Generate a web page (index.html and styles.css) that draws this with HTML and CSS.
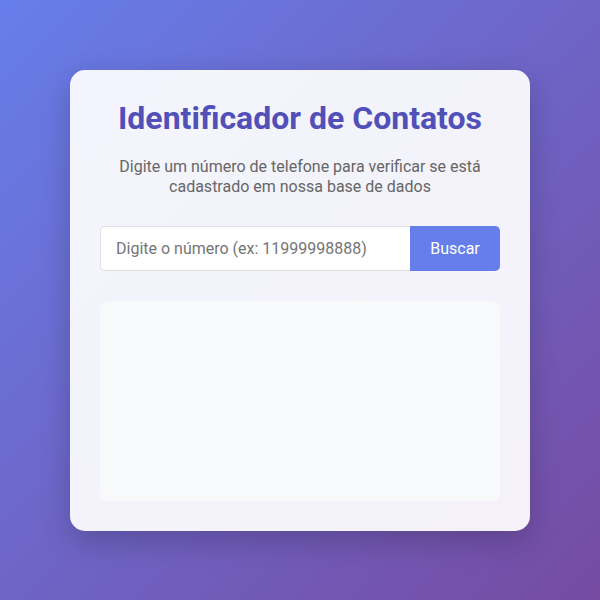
FILE: index.html
```html
<!DOCTYPE html>
<html lang="pt-BR">
<head>
<meta charset="utf-8">
<title>Identificador de Contatos</title>
<link rel="stylesheet" href="styles.css">
</head>
<body>
<div class="card">
  <h1 class="title">Identificador de Contatos</h1>
  <p class="subtitle">Digite um número de telefone para verificar se está cadastrado em nossa base de dados</p>
  <div class="search">
    <input class="search-input" type="text" placeholder="Digite o número (ex: 11999998888)">
    <button class="search-btn">Buscar</button>
  </div>
  <div class="results"></div>
</div>
</body>
</html>
```
FILE: styles.css
```css
* { box-sizing: border-box; }
html, body { margin: 0; padding: 0; }
body {
  min-height: 100vh;
  background: linear-gradient(135deg, #667eea 0%, #764ba2 100%);
  font-family: Roboto, "Noto Sans", sans-serif;
  display: flex;
  align-items: center;
  justify-content: center;
}
.card {
  width: 460px;
  padding: 30px;
  background: rgba(255, 255, 255, 0.92);
  border-radius: 15px;
  box-shadow: 0 10px 30px rgba(0, 0, 0, 0.2);
}
.title {
  margin: 0;
  text-align: center;
  font-size: 32px;
  line-height: 37px;
  font-weight: 700;
  color: #5150b8;
}
.subtitle {
  margin: 20px 0 29px;
  text-align: center;
  font-size: 16px;
  line-height: 20px;
  color: #666;
}
.search {
  display: flex;
  height: 45px;
}
.search-input {
  flex: 1;
  min-width: 0;
  padding: 0 15px;
  font-family: inherit;
  font-size: 16px;
  color: #333;
  background: #fff;
  border: 1px solid #e0e0e0;
  border-right: none;
  border-radius: 5px 0 0 5px;
  outline: none;
}
.search-input::placeholder { color: #757575; }
.search-btn {
  width: 90px;
  font-family: inherit;
  font-size: 16px;
  color: #fff;
  background: #667eea;
  border: none;
  border-radius: 0 5px 5px 0;
}
.results {
  margin-top: 30px;
  height: 200px;
  background: #f8f9fa;
  border-radius: 8px;
}
```
